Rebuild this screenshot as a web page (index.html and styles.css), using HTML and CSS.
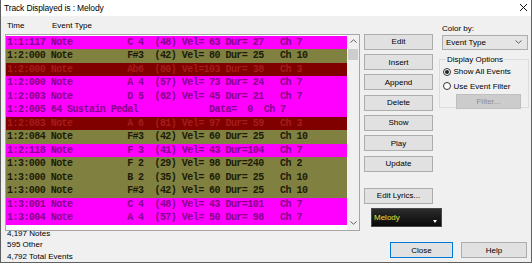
FILE: index.html
```html
<!DOCTYPE html>
<html lang="en">
<head>
    <meta charset="UTF-8">
    <title>Track Displayed is : Melody</title>
    <link rel="stylesheet" href="styles.css">
</head>
<body>
<div class="window">

    <div class="titlebar">
        <span>Track Displayed is : Melody</span>
        <svg class="x" width="9" height="9" viewBox="0 0 9 9"><path d="M1 1L8 8M8 1L1 8" stroke="#111" stroke-width="1"/></svg>
    </div>

    <div class="main">

        <!-- lista de eventos -->
        <div class="list-col">
            <div class="list-head">
                <span class="h-time">Time</span>
                <span>Event Type</span>
            </div>

            <div class="listbox">
                <div class="rows">
<div class="row mag">1:1:117 Note          C 4  (48) Vel= 63 Dur= 27   Ch 7</div>
<div class="row olv">1:2:000 Note          F#3  (42) Vel= 80 Dur= 25   Ch 10</div>
<div class="row red">1:2:000 Note          Ab6  (80) Vel=103 Dur= 38   Ch 3</div>
<div class="row mag">1:2:000 Note          A 4  (57) Vel= 73 Dur= 24   Ch 7</div>
<div class="row mag">1:2:003 Note          D 5  (62) Vel= 45 Dur= 21   Ch 7</div>
<div class="row mag">1:2:005 64 Sustain Pedal             Data=  0  Ch 7</div>
<div class="row red">1:2:083 Note          A 6  (81) Vel= 97 Dur= 59   Ch 3</div>
<div class="row olv">1:2:084 Note          F#3  (42) Vel= 60 Dur= 25   Ch 10</div>
<div class="row mag">1:2:118 Note          F 3  (41) Vel= 43 Dur=104   Ch 7</div>
<div class="row olv">1:3:000 Note          F 2  (29) Vel= 98 Dur=240   Ch 2</div>
<div class="row olv">1:3:000 Note          B 2  (35) Vel= 60 Dur= 25   Ch 10</div>
<div class="row olv">1:3:000 Note          F#3  (42) Vel= 60 Dur= 25   Ch 10</div>
<div class="row mag">1:3:001 Note          C 4  (48) Vel= 43 Dur=101   Ch 7</div>
<div class="row mag">1:3:004 Note          A 4  (57) Vel= 50 Dur= 98   Ch 7</div>
                </div>
                <div class="scrollbar">
                    <div class="arrow">
                        <svg width="7" height="4" viewBox="0 0 7 4"><path d="M0.5 3.5L3.5 0.8L6.5 3.5" fill="none" stroke="#606060"/></svg>
                    </div>
                    <div class="thumb"></div>
                    <div class="track"></div>
                    <div class="arrow">
                        <svg width="7" height="4" viewBox="0 0 7 4"><path d="M0.5 0.5L3.5 3.2L6.5 0.5" fill="none" stroke="#606060"/></svg>
                    </div>
                </div>
            </div>

            <div class="stats">
                <p>4,197 Notes</p>
                <p>595 Other</p>
                <p>4,792 Total Events</p>
            </div>
        </div>

        <div class="right">
            <div class="top">
                <div class="btn-col">
                    <div class="btn">Edit</div>
                    <div class="btn">Insert</div>
                    <div class="btn">Append</div>
                    <div class="btn">Delete</div>
                    <div class="btn">Show</div>
                    <div class="btn">Play</div>
                    <div class="btn">Update</div>
                    <div class="btn lyrics">Edit Lyrics...</div>
                    <div class="melody">
                        <span>Melody</span>
                        <span class="tri"></span>
                    </div>
                </div>

                <div class="side">
                    <p class="side-label">Color by:</p>
                    <div class="combo">
                        <span>Event Type</span>
                        <svg width="7" height="4" viewBox="0 0 7 4"><path d="M0.5 0.5L3.5 3.2L6.5 0.5" fill="none" stroke="#606060"/></svg>
                    </div>

                    <fieldset class="group">
                        <legend>Display Options</legend>
                        <div class="radio-row"><span class="radio on"></span>Show All Events</div>
                        <div class="radio-row"><span class="radio"></span>Use Event Filter</div>
                        <div class="btn disabled filter">Filter...</div>
                    </fieldset>
                </div>
            </div>

            <div class="bottom">
                <div class="btn close">Close</div>
                <div class="btn help">Help</div>
            </div>
        </div>

    </div>
</div>
</body>
</html>
```

FILE: styles.css
```css
body {
    margin: 0;
    font-family: "Liberation Sans", Arial, sans-serif;
    font-size: 8px;
    color: #000;
    background: #f0f0f0;
}

p {
    margin: 0;
}

.window {
    width: 532px;
    height: 263px;
    box-sizing: border-box;
    border: 1px solid #5f5f5f;
    border-top: none;
    background: #f0f0f0;
    display: flex;
    flex-direction: column;
    overflow: hidden;
}

.titlebar {
    height: 16px;
    background: #fff;
    display: flex;
    align-items: center;
    justify-content: space-between;
    padding: 0 3px 0 3px;
    font-size: 8.5px;
    letter-spacing: -0.15px;
}

.main {
    flex: 1;
    display: flex;
}

/* columna izquierda */
.list-col {
    width: 355px;
    margin-left: 4px;
    display: flex;
    flex-direction: column;
}

.list-head {
    display: flex;
    height: 10px;
    line-height: 10px;
    margin: 5px 0 3px 2px;
}

.h-time {
    width: 45px;
}

.listbox {
    height: 197px;
    box-sizing: border-box;
    border: 1px solid #a6a6a6;
    background: #fff;
    display: flex;
}

.rows {
    width: 341px;
    padding-top: 1px;
}

.row {
    height: 13.5px;
    line-height: 13.5px;
    padding-left: 1px;
    font-family: "Liberation Mono", "Courier New", monospace;
    font-size: 10px;
    font-weight: bold;
    letter-spacing: -0.54px;
    white-space: pre;
    overflow: hidden;
}

.mag {
    background: #ff00ff;
    color: #86008a;
}

.olv {
    background: #808040;
    color: #1c1c08;
}

.red {
    background: #800000;
    color: #a41c1c;
}

.scrollbar {
    width: 12px;
    display: flex;
    flex-direction: column;
    background: #f0f0f0;
}

.arrow {
    height: 13px;
    display: flex;
    align-items: center;
    justify-content: center;
}

.thumb {
    height: 11px;
    margin: 1px 1px 0 1px;
    background: #cdcdcd;
}

.track {
    flex: 1;
}

.stats {
    margin-top: -3px;
    padding-left: 2px;
    line-height: 11.4px;
}

/* columna derecha */
.right {
    flex: 1;
    display: flex;
    flex-direction: column;
    margin-left: 4px;
    padding: 8px 2px 4px 0;
}

.top {
    display: flex;
    gap: 6px;
}

.btn-col {
    width: 69px;
    margin-top: 10px;
    display: flex;
    flex-direction: column;
    gap: 4.3px;
}

.btn {
    height: 16px;
    box-sizing: border-box;
    border: 1px solid #adadad;
    background: #e1e1e1;
    display: flex;
    align-items: center;
    justify-content: center;
}

.lyrics {
    margin-top: 12px;
}

.melody {
    width: 71px;
    height: 19px;
    margin-left: 7px;
    box-sizing: border-box;
    border: 1px solid #4a4a4a;
    background: linear-gradient(#2c2c2c, #080808);
    color: #e2e236;
    display: flex;
    justify-content: space-between;
    padding: 3px 4px 0 2px;
    line-height: 11px;
}

.tri {
    width: 0;
    height: 0;
    margin-top: 8px;
    border-left: 2px solid transparent;
    border-right: 2px solid transparent;
    border-top: 3px solid #fff;
}

.side {
    width: 90px;
}

.side-label {
    height: 10px;
    line-height: 10px;
    padding-left: 3px;
}

.combo {
    height: 15px;
    margin: 1px 1px 0 3px;
    box-sizing: border-box;
    border: 1px solid #adadad;
    background: #e5e5e5;
    display: flex;
    align-items: center;
    justify-content: space-between;
    padding: 0 5px 0 3px;
}

.group {
    margin: 5px 0 0 0;
    padding: 0 0 0 3px;
    height: 53px;
    box-sizing: border-box;
    border: 1px solid #dcdcdc;
}

.group legend {
    margin-left: 3px;
    padding: 0 1px;
    line-height: 10px;
}

.radio-row {
    height: 14.3px;
    display: flex;
    align-items: center;
    gap: 2.5px;
}

.radio {
    width: 8px;
    height: 8px;
    box-sizing: border-box;
    border: 1px solid #333;
    border-radius: 50%;
    background: #fff;
    display: flex;
    align-items: center;
    justify-content: center;
}

.radio.on::after {
    content: "";
    width: 4px;
    height: 4px;
    border-radius: 50%;
    background: #222;
}

.filter {
    width: 65px;
    height: 15px;
    margin: 1px 0 0 13px;
}

.disabled {
    background: #cccccc;
    border-color: #bfbfbf;
    color: #8c8c8c;
}

.bottom {
    margin-top: auto;
    display: flex;
    justify-content: flex-end;
    gap: 8px;
}

.close {
    width: 63px;
    border-color: #0078d7;
}

.help {
    width: 66px;
    margin-right: 2px;
}
```
